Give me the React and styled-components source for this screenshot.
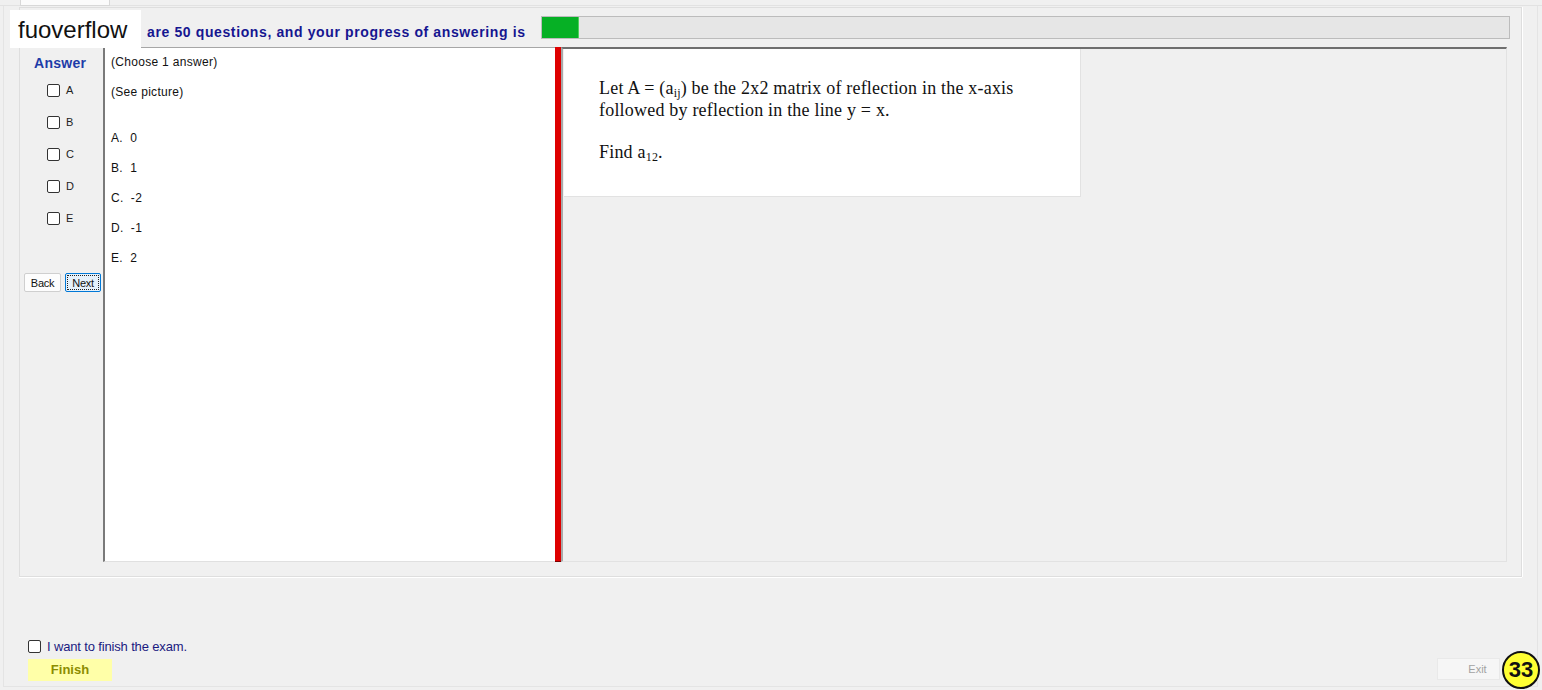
import React from "react";
import styled, { createGlobalStyle } from "styled-components";

const GlobalStyle = createGlobalStyle`
  html, body {
    margin: 0;
    padding: 0;
    background: #f0f0f0;
  }
  body {
    font-family: "Liberation Sans", Arial, sans-serif;
  }
`;

const Page = styled.div`
  position: relative;
  width: 1542px;
  height: 690px;
  overflow: hidden;
  background: #f0f0f0;
  display: flex;
  flex-direction: column;
`;

const TabStrip = styled.div`
  height: 6px;
  flex-shrink: 0;
  display: flex;
  border-bottom: 1px solid #e2e2e2;
  box-sizing: border-box;
`;

const Tab = styled.div`
  margin-left: 20px;
  width: 90px;
  height: 6px;
  background: #fbfbfb;
  border: 1px solid #d8d8d8;
  border-top: none;
  box-sizing: border-box;
`;

const Frame = styled.div`
  margin-left: 3px;
  width: 1535px;
  height: 681px;
  box-sizing: border-box;
  border: 1px solid #e4e4e4;
  border-top: none;
  padding: 1px 0 0 15px;
  display: flex;
  flex-direction: column;
`;

const Group = styled.div`
  width: 1503px;
  height: 570px;
  box-sizing: border-box;
  border: 1px solid #dedede;
  box-shadow: 0 1px 0 #ffffff, 1px 0 0 #ffffff;
  display: flex;
  flex-direction: column;
`;

const HeaderRow = styled.div`
  height: 39px;
  flex-shrink: 0;
  display: flex;
  align-items: flex-start;
  padding-left: 127px;
  box-sizing: border-box;
`;

const Title = styled.div`
  width: 394px;
  padding-top: 16px;
  font-size: 14px;
  line-height: 16px;
  letter-spacing: 0.62px;
  font-weight: bold;
  color: #161690;
  white-space: nowrap;
`;

const Progress = styled.div`
  margin-top: 8px;
  width: 969px;
  height: 23px;
  box-sizing: border-box;
  background: #e6e6e6;
  border: 1px solid #bcbcbc;
  display: flex;
`;

const ProgressFill = styled.div`
  height: 100%;
  background: #06b025;
  border-right: 1px solid #4fcf5c;
`;

const Body = styled.div`
  display: flex;
  height: 515px;
  margin-left: 4px;
`;

const LeftCol = styled.div`
  width: 79px;
  flex-shrink: 0;
  display: flex;
  flex-direction: column;
`;

const AnswerTitle = styled.div`
  padding: 8px 0 0 10px;
  font-size: 14px;
  line-height: 16px;
  letter-spacing: 0.3px;
  font-weight: bold;
  color: #1e3ca8;
`;

const Options = styled.div`
  margin-top: 13px;
  display: flex;
  flex-direction: column;
`;

const OptionRow = styled.label`
  height: 32px;
  display: flex;
  align-items: flex-start;
  gap: 6px;
  padding-left: 23px;
  font-size: 11px;
  line-height: 12px;
  color: #222;
`;

const Box = styled.span`
  display: inline-block;
  width: 13px;
  height: 13px;
  box-sizing: border-box;
  border: 1px solid #333;
  border-radius: 2px;
  background: #fff;
  flex-shrink: 0;
`;

const NavRow = styled.div`
  margin-top: 29px;
  display: flex;
  gap: 4px;
`;

const NavButton = styled.button`
  width: ${(p) => p.$w}px;
  height: 19px;
  padding: 0;
  box-sizing: border-box;
  font-family: "Liberation Sans", Arial, sans-serif;
  font-size: 11px;
  letter-spacing: -0.3px;
  color: #111;
  background: ${(p) => (p.$focus ? "#e5f1fb" : "#fdfdfd")};
  border: 1px solid ${(p) => (p.$focus ? "#0078d7" : "#cfcfcf")};
  outline: ${(p) => (p.$focus ? "1px dotted #222" : "none")};
  outline-offset: -3px;
  border-radius: 2px;
`;

const AnswerPanel = styled.div`
  width: 453px;
  flex-shrink: 0;
  box-sizing: border-box;
  background: #ffffff;
  border-left: 2px solid #7a7a7a;
  border-top: 1px solid #a6a6a6;
  border-bottom: 1px solid #e0e0e0;
  padding: 1px 0 0 6px;
  font-size: 12px;
  letter-spacing: 0.3px;
  color: #111;
`;

const Line = styled.div`
  height: 30px;
  line-height: 26px;
  white-space: pre;
  margin-top: ${(p) => p.$gap || 0}px;
`;

const Splitter = styled.div`
  width: 6px;
  margin-left: -1px;
  flex-shrink: 0;
  background: #de0000;
  border-bottom: 1px solid #7a0000;
  box-sizing: border-box;
`;

const RightPanel = styled.div`
  width: 946px;
  flex-shrink: 0;
  box-sizing: border-box;
  border-top: 2px solid #6f6f6f;
  border-left: 2px solid #a9a9a9;
  border-right: 1px solid #e2e2e2;
  border-bottom: 1px solid #e2e2e2;
  background: #f0f0f0;
`;

const QuestionBox = styled.div`
  margin-left: 1px;
  width: 517px;
  height: 148px;
  box-sizing: border-box;
  background: #ffffff;
  border-right: 1px solid #e2e2e2;
  border-bottom: 1px solid #e2e2e2;
  padding: 28px 0 0 35px;
  font-family: "Liberation Serif", "Times New Roman", serif;
  font-size: 18px;
  line-height: 22px;
  letter-spacing: 0.2px;
  color: #111;
`;

const Para = styled.p`
  margin: 0;
  margin-top: ${(p) => p.$before || 0}px;
  white-space: nowrap;
  sub {
    font-size: 12px;
    vertical-align: -3px;
    line-height: 0;
  }
`;

const FinishArea = styled.div`
  margin-top: 62px;
  padding-left: 9px;
  display: flex;
  flex-direction: column;
`;

const FinishCheck = styled.label`
  display: flex;
  align-items: center;
  gap: 6px;
  font-size: 13px;
  letter-spacing: -0.15px;
  color: #1a1a80;
  height: 14px;
`;

const BottomRow = styled.div`
  margin-top: 6px;
  display: flex;
  justify-content: space-between;
  align-items: flex-start;
  padding-right: 37px;
`;

const FinishButton = styled.div`
  width: 84px;
  height: 22px;
  background: #ffffa8;
  color: #8c8c00;
  font-size: 13px;
  font-weight: bold;
  text-align: center;
  line-height: 22px;
`;

const ExitButton = styled.div`
  margin-top: -1px;
  width: 63px;
  height: 22px;
  box-sizing: border-box;
  background: #f6f6f6;
  border: 1px solid #e9e9e9;
  color: #a3a3a3;
  font-size: 11px;
  line-height: 20px;
  text-align: center;
  padding-left: 18px;
`;

const Watermark = styled.div`
  position: absolute;
  left: 10px;
  top: 10px;
  width: 131px;
  height: 38px;
  box-sizing: border-box;
  background: #ffffff;
  padding-left: 8px;
  font-size: 24px;
  line-height: 40px;
  color: #111;
`;

const Badge = styled.div`
  position: absolute;
  left: 1502px;
  top: 651px;
  width: 38px;
  height: 38px;
  box-sizing: border-box;
  border-radius: 50%;
  border: 2px solid #111;
  background: #ffff33;
  font-size: 22px;
  font-weight: bold;
  line-height: 34px;
  text-align: center;
  color: #111;
`;

const letters = ["A", "B", "C", "D", "E"];
const choices = ["A.  0", "B.  1", "C.  -2", "D.  -1", "E.  2"];

export default function App() {
  const progress = 36;
  return (
    <>
      <GlobalStyle />
      <Page>
        <TabStrip>
          <Tab />
        </TabStrip>
        <Frame>
          <Group>
            <HeaderRow>
              <Title>are 50 questions, and your progress of answering is</Title>
              <Progress>
                <ProgressFill style={{ width: progress }} />
              </Progress>
            </HeaderRow>
            <Body>
              <LeftCol>
                <AnswerTitle>Answer</AnswerTitle>
                <Options>
                  {letters.map((l) => (
                    <OptionRow key={l}>
                      <Box />
                      <span>{l}</span>
                    </OptionRow>
                  ))}
                </Options>
                <NavRow>
                  <NavButton $w={37}>Back</NavButton>
                  <NavButton $w={36} $focus>
                    Next
                  </NavButton>
                </NavRow>
              </LeftCol>
              <AnswerPanel>
                <Line>(Choose 1 answer)</Line>
                <Line>(See picture)</Line>
                {choices.map((c, i) => (
                  <Line key={c} $gap={i === 0 ? 16 : 0}>
                    {c}
                  </Line>
                ))}
              </AnswerPanel>
              <Splitter />
              <RightPanel>
                <QuestionBox>
                  <Para>
                    Let A = (a<sub>ij</sub>) be the 2x2 matrix of reflection in the x-axis
                  </Para>
                  <Para>followed by reflection in the line y = x.</Para>
                  <Para $before={20}>
                    Find a<sub>12</sub>.
                  </Para>
                </QuestionBox>
              </RightPanel>
            </Body>
          </Group>
          <FinishArea>
            <FinishCheck>
              <Box />
              <span>I want to finish the exam.</span>
            </FinishCheck>
            <BottomRow>
              <FinishButton>Finish</FinishButton>
              <ExitButton>Exit</ExitButton>
            </BottomRow>
          </FinishArea>
        </Frame>
        <Watermark>fuoverflow</Watermark>
        <Badge>33</Badge>
      </Page>
    </>
  );
}
